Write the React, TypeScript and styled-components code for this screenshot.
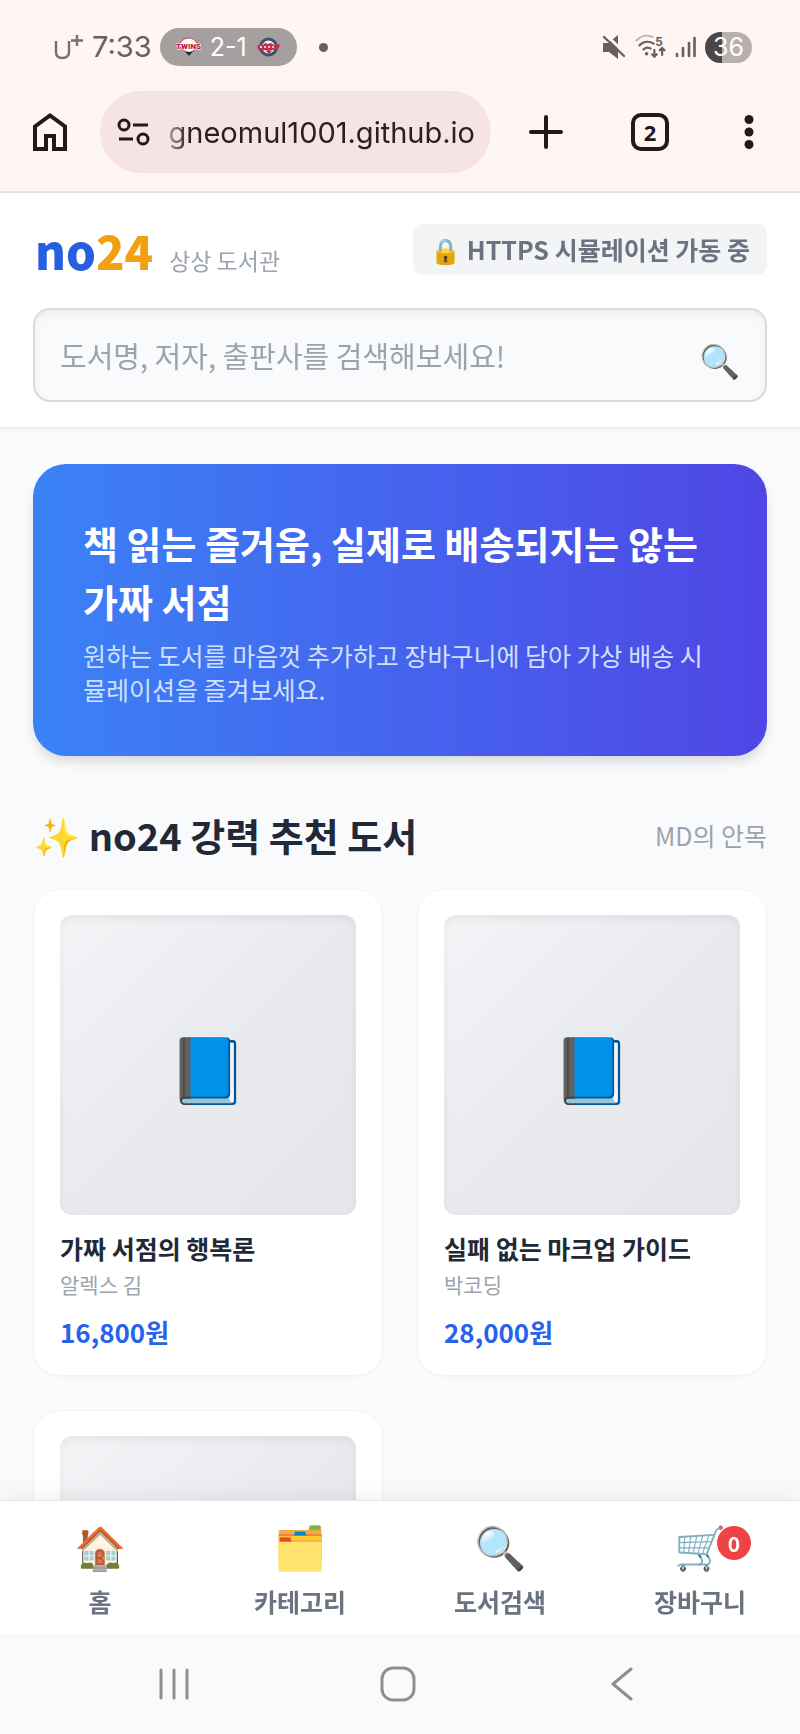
import React from "react";
import styled, { createGlobalStyle } from "styled-components";

const UI_FONT = '"Noto Sans CJK KR", "Noto Sans", sans-serif';
const SYSTEM_FONT = 'Inter, "Noto Sans CJK KR", sans-serif';

const GlobalStyle = createGlobalStyle`
  * { box-sizing: border-box; }
  html, body, #root { height: 100%; }
  body { margin: 0; background: #f9fafb; color: #1f2937; font-family: ${UI_FONT}; }
  h1, h2, h3, p { margin: 0; }
  button, input { font-family: inherit; }
  button { padding: 0; border: 0; background: none; cursor: pointer; }
  a { color: inherit; text-decoration: none; }
`;

const Screen = styled.div`
  display: flex;
  flex-direction: column;
  height: 100vh;
`;

/* ---------- phone status bar and browser toolbar ---------- */

const BrowserChrome = styled.div`
  flex: none;
  background: #fff6f4;
  border-bottom: 2px solid #ece0e0;
  font-family: ${SYSTEM_FONT};
`;

const StatusBar = styled.div`
  display: flex;
  align-items: center;
  justify-content: space-between;
  height: 67px;
  padding: 27px 48px 0 54px;
  color: #666060;
`;

const StatusGroup = styled.div<{ $gap: number }>`
  display: flex;
  align-items: center;
  gap: ${(p) => p.$gap}px;
`;

const Clock = styled.span`
  font-size: 29px;
  line-height: 40px;
`;

const ScorePill = styled.div`
  display: flex;
  align-items: center;
  justify-content: space-between;
  width: 137px;
  height: 38px;
  padding: 0 16px;
  border-radius: 19px;
  background: #a3a09f;
  color: #fff;
  font-size: 25px;
  line-height: 38px;
`;

const NoticeDot = styled.span`
  width: 9px;
  height: 9px;
  margin-left: 14px;
  border-radius: 50%;
  background: #666060;
`;

const Battery = styled.span`
  width: 47px;
  height: 31px;
  border-radius: 16px;
  background: linear-gradient(90deg, #4c4646 36%, #b8afaf 36%);
  color: #fff;
  font-size: 25px;
  line-height: 31px;
  text-align: center;
`;

const Toolbar = styled.div`
  display: flex;
  align-items: center;
  padding: 24px 4px 18px 0;
  color: #211a1a;
`;

const ToolButton = styled.button<{ $width: number }>`
  display: flex;
  align-items: center;
  justify-content: center;
  flex: none;
  width: ${(p) => p.$width}px;
  height: 82px;
  color: inherit;
`;

const AddressBar = styled.label`
  display: flex;
  align-items: center;
  flex: 1;
  min-width: 0;
  height: 82px;
  margin-right: 3px;
  padding: 0 16px 0 17px;
  border-radius: 41px;
  background: #f5e4e3;
`;

const AddressInput = styled.input`
  flex: 1;
  min-width: 0;
  height: 48px;
  margin-left: 14px;
  padding: 0;
  border: 0;
  outline: 0;
  background: none;
  color: #2a2020;
  font-size: 29px;
  text-align: right;
  mask-image: linear-gradient(90deg, rgba(0, 0, 0, 0.2), #000 24px);
`;

const StatusIcons = () => (
  <>
    <svg width="24" height="24" viewBox="0 0 24 24" aria-label="무음">
      <path d="M1 8h5l10-8v24l-9-7H1z" fill="#666060" />
      <path d="M3-1l22 21" stroke="#fff6f4" strokeWidth="3" />
      <path d="M2 2l20 19" stroke="#666060" strokeWidth="2.4" strokeLinecap="round" />
    </svg>
    <svg width="31" height="26" viewBox="0 0 32 26" fill="none" strokeWidth="2.2" aria-label="와이파이">
      <path d="M1 7C6 1 13 0 19 3" stroke="#bdb5b5" />
      <path d="M4 12c4-5 11-6 16-2M8 16c3-3 6-3 9-1" stroke="#666060" />
      <circle cx="12" cy="20" r="1.8" fill="#666060" />
      <path d="M20 15v8m-3-3l3 3 3-3M28 22v-8m-3 3l3-3 3 3" stroke="#666060" />
      <text x="21" y="12" fill="#666060" fontSize="12" fontWeight="700" fontFamily="Inter">5</text>
    </svg>
    <svg width="21" height="22" viewBox="0 0 21 22" stroke="#666060" strokeWidth="2.6" strokeLinecap="round" aria-label="신호">
      <path d="M2 18v2M8 12v8M14 7v13M19.500 2v18" />
    </svg>
  </>
);

const TwinsLogo = () => (
  <svg width="25" height="20" viewBox="0 0 25 20" aria-hidden="true">
    <path d="M3 9C5 3 9 1 13 1s7 2 9 8l-9 9z" fill="#fff" stroke="#c8304f" strokeWidth="1" />
    <path d="M9 14l4 5 4-5-4 1z" fill="#28233a" />
    <text x="12.500" y="12" textAnchor="middle" fontFamily="Roboto" fontWeight="900" fontSize="8" fill="#c0163b" stroke="#fff" strokeWidth="1.200" paintOrder="stroke">TWINS</text>
  </svg>
);

const RivalLogo = () => (
  <svg width="25" height="20" viewBox="0 0 25 20" aria-hidden="true">
    <circle cx="12.500" cy="10" r="8" fill="#eef0f4" stroke="#3d536f" strokeWidth="3" />
    <path d="M1 9l3-2 3 1 2-2 3 1 3-1 3 2 5-1 1 2-2 3-5 1-4 1-5-1-5 1z" fill="#c62f4a" />
    <path d="M4 10h2m2 0h2m2 0h2m2 0h2" stroke="#fff" strokeWidth="1.400" />
    <path d="M10 14l3 3 3-3z" fill="#c62f4a" />
  </svg>
);

const HomeOutline = () => (
  <svg width="34" height="38" viewBox="0 0 34 38" fill="none" stroke="currentColor" strokeWidth="4" aria-hidden="true">
    <path d="M2 36V13.500L17 2.500l15 11V36H21V23h-8v13z" />
  </svg>
);

const SiteSettings = () => (
  <svg width="33" height="28" viewBox="0 0 33 28" fill="none" stroke="#211a1a" strokeWidth="3" aria-hidden="true">
    <circle cx="7" cy="7" r="5" />
    <path d="M16 7h15M2 21h14" />
    <circle cx="26" cy="21" r="5" />
  </svg>
);

const PlusIcon = () => (
  <svg width="34" height="34" viewBox="0 0 34 34" stroke="currentColor" strokeWidth="4" strokeLinecap="round" aria-hidden="true">
    <path d="M17 2v30M2 17h30" />
  </svg>
);

const MoreIcon = () => (
  <svg width="10" height="34" viewBox="0 0 10 34" fill="currentColor" aria-hidden="true">
    <circle cx="5" cy="4.500" r="4.500" />
    <circle cx="5" cy="17" r="4.500" />
    <circle cx="5" cy="29.500" r="4.500" />
  </svg>
);

const TabCount = styled.span`
  width: 38px;
  height: 38px;
  border: 4px solid currentColor;
  border-radius: 10px;
  font: 700 22px/30px "Noto Sans", sans-serif;
  text-align: center;
`;

/* ---------- shop header ---------- */

const ShopHeader = styled.header`
  position: relative;
  flex: none;
  padding: 31px 33px 25px;
  border-bottom: 2px solid #eceef0;
  background: #fff;
  box-shadow: 0 2px 4px rgba(0, 0, 0, 0.04);
`;

const HeaderRow = styled.div`
  display: flex;
  align-items: flex-start;
  justify-content: space-between;
  height: 51px;
`;

const Brand = styled.h1`
  display: flex;
  align-items: baseline;
  padding-left: 2px;
  color: #2560e0;
  font-size: 47px;
  font-weight: 900;
  line-height: 52px;
`;

const BrandAccent = styled.span`
  color: #f1a010;
`;

const BrandNote = styled.span`
  margin-left: 16px;
  color: #9ca3af;
  font-size: 23px;
  font-weight: 400;
`;

const SecureBadge = styled.span`
  padding: 0 17px;
  border-radius: 9px;
  background: #f3f4f6;
  color: #6b7280;
  font-size: 25px;
  font-weight: 700;
  line-height: 51px;
`;

const SearchBox = styled.form`
  display: flex;
  align-items: center;
  height: 94px;
  margin-top: 33px;
  padding: 0 25px;
  border: 2px solid #d8dbdf;
  border-radius: 17px;
  background: #f9fafb;
  box-shadow: inset 0 4px 8px rgba(0, 0, 0, 0.05);
`;

const SearchInput = styled.input`
  flex: 1;
  min-width: 0;
  height: 60px;
  padding: 0;
  border: 0;
  outline: 0;
  background: none;
  font-size: 29px;
  &::placeholder { color: #9ca3af; opacity: 1; }
`;

const SearchButton = styled.button`
  padding-top: 8px;
  font-size: 33px;
  line-height: 40px;
`;

/* ---------- main content ---------- */

const Content = styled.main`
  flex: 1;
  min-height: 0;
  padding: 35px 33px;
  overflow-y: auto;
  scrollbar-width: none;
  background: #f9fafb;
`;

const Banner = styled.section`
  padding: 50px;
  border-radius: 33px;
  background: linear-gradient(90deg, #3b82f6, #4f46e5);
  box-shadow: 0 7px 12px -2px rgba(0, 0, 0, 0.14);
  color: #fff;
`;

const BannerTitle = styled.h2`
  font-size: 38px;
  font-weight: 700;
  line-height: 58px;
`;

const BannerText = styled.p`
  margin-top: 8px;
  color: #cfe0fd;
  font-size: 25px;
  line-height: 34px;
`;

const SectionHead = styled.div`
  display: flex;
  align-items: center;
  justify-content: space-between;
  margin: 50px 0 25px;
`;

const SectionTitle = styled.h2`
  font-size: 38px;
  font-weight: 700;
  line-height: 58px;
`;

const SectionNote = styled.span`
  color: #9ca3af;
  font-size: 25px;
  line-height: 34px;
`;

const BookGrid = styled.div`
  display: grid;
  grid-template-columns: 1fr 1fr;
  gap: 34px;
`;

const BookCard = styled.article`
  padding: 25px 26px;
  border: 1px solid #f1f3f5;
  border-radius: 26px;
  background: #fff;
  box-shadow: 0 1px 2px rgba(0, 0, 0, 0.03);
`;

const Cover = styled.div`
  display: flex;
  align-items: center;
  justify-content: center;
  height: 300px;
  margin-bottom: 14px;
  border-radius: 12px;
  background: linear-gradient(135deg, #f3f4f6, #e9eaee 50%, #e5e6e9);
  box-shadow: inset 0 4px 8px rgba(0, 0, 0, 0.06);
  font-size: 64px;
  line-height: 80px;
`;

const BookTitle = styled.h3`
  font-size: 25px;
  font-weight: 700;
  line-height: 38px;
`;

const Author = styled.p`
  color: #9ca3af;
  font-size: 21px;
  line-height: 34px;
`;

const Price = styled.p`
  margin-top: 13px;
  color: #2563eb;
  font-size: 26px;
  font-weight: 700;
  line-height: 36px;
`;

/* ---------- bottom navigation ---------- */

const BottomNav = styled.nav`
  position: relative;
  flex: none;
  display: grid;
  grid-template-columns: repeat(4, 1fr);
  height: 134px;
  padding: 18px 0 14px;
  border-top: 1px solid #e5e7eb;
  background: #fff;
  box-shadow: 0 -6px 20px rgba(0, 0, 0, 0.05);
`;

const NavLink = styled.a`
  display: flex;
  flex-direction: column;
  align-items: center;
  gap: 12px;
  color: #6b7280;
  font-size: 25px;
  font-weight: 700;
  line-height: 36px;
`;

const NavIcon = styled.span`
  position: relative;
  font-size: 42px;
  line-height: 52px;
`;

const CartCount = styled.span`
  position: absolute;
  top: 7px;
  right: -25px;
  width: 34px;
  height: 34px;
  border-radius: 50%;
  background: #ef4444;
  color: #fff;
  font-size: 21px;
  font-weight: 700;
  line-height: 34px;
  text-align: center;
`;

const SystemNav = styled.div`
  flex: none;
  display: grid;
  grid-template-columns: repeat(3, 1fr);
  height: 100px;
  padding: 0 66px 0 62px;
  background: #f8fafb;
`;

const SystemButton = styled.button`
  display: flex;
  align-items: center;
  justify-content: center;
  color: #8d8f91;
`;

const books = [
  { title: "가짜 서점의 행복론", author: "알렉스 김", price: "16,800원" },
  { title: "실패 없는 마크업 가이드", author: "박코딩", price: "28,000원" },
  { title: "", author: "", price: "" },
];

const navItems = [
  { icon: "🏠", label: "홈" },
  { icon: "🗂️", label: "카테고리" },
  { icon: "🔍", label: "도서검색" },
  { icon: "🛒", label: "장바구니", count: 0 },
];

export default function App() {
  return (
    <Screen>
      <GlobalStyle />
      <BrowserChrome>
        <StatusBar>
          <StatusGroup $gap={8}>
            <svg width="30" height="28" viewBox="0 0 30 28" fill="none" stroke="#777070" strokeWidth="2.400" aria-label="U+">
              <path d="M2 8v11c0 4 2 6 6 6s7-2 7-6V8M23 2v11M17 7.500h12" />
            </svg>
            <Clock>7:33</Clock>
            <ScorePill>
              <TwinsLogo />
              <span>2-1</span>
              <RivalLogo />
            </ScorePill>
            <NoticeDot />
          </StatusGroup>
          <StatusGroup $gap={9}>
            <StatusIcons />
            <Battery>36</Battery>
          </StatusGroup>
        </StatusBar>
        <Toolbar>
          <ToolButton $width={100} aria-label="홈페이지"><HomeOutline /></ToolButton>
          <AddressBar>
            <SiteSettings />
            <AddressInput aria-label="주소" defaultValue="gneomul1001.github.io" />
          </AddressBar>
          <ToolButton $width={104} aria-label="새 탭"><PlusIcon /></ToolButton>
          <ToolButton $width={104} aria-label="탭 목록"><TabCount>2</TabCount></ToolButton>
          <ToolButton $width={94} aria-label="더보기"><MoreIcon /></ToolButton>
        </Toolbar>
      </BrowserChrome>

      <ShopHeader>
        <HeaderRow>
          <Brand>no<BrandAccent>24</BrandAccent><BrandNote>상상 도서관</BrandNote></Brand>
          <SecureBadge>🔒 HTTPS 시뮬레이션 가동 중</SecureBadge>
        </HeaderRow>
        <SearchBox>
          <SearchInput aria-label="도서 검색" placeholder="도서명, 저자, 출판사를 검색해보세요!" />
          <SearchButton type="button" aria-label="검색">🔍</SearchButton>
        </SearchBox>
      </ShopHeader>

      <Content>
        <Banner>
          <BannerTitle>책 읽는 즐거움, 실제로 배송되지는 않는 가짜 서점</BannerTitle>
          <BannerText>원하는 도서를 마음껏 추가하고 장바구니에 담아 가상 배송 시뮬레이션을 즐겨보세요.</BannerText>
        </Banner>
        <SectionHead>
          <SectionTitle>✨ no24 강력 추천 도서</SectionTitle>
          <SectionNote>MD의 안목</SectionNote>
        </SectionHead>
        <BookGrid>
          {books.map((book, i) => (
            <BookCard key={i}>
              <Cover>{book.title && "📘"}</Cover>
              <BookTitle>{book.title}</BookTitle>
              <Author>{book.author}</Author>
              <Price>{book.price}</Price>
            </BookCard>
          ))}
        </BookGrid>
      </Content>

      <BottomNav>
        {navItems.map((item) => (
          <NavLink key={item.label} href="#">
            <NavIcon>
              {item.icon}
              {item.count !== undefined && <CartCount>{item.count}</CartCount>}
            </NavIcon>
            {item.label}
          </NavLink>
        ))}
      </BottomNav>

      <SystemNav>
        <SystemButton aria-label="최근 앱">
          <svg width="32" height="34" viewBox="0 0 32 34" stroke="currentColor" strokeWidth="3" strokeLinecap="round">
            <path d="M3 3v28M16 3v28M29 3v28" />
          </svg>
        </SystemButton>
        <SystemButton aria-label="홈 화면">
          <svg width="36" height="36" viewBox="0 0 36 36" fill="none" stroke="currentColor" strokeWidth="3">
            <rect x="2" y="2" width="32" height="32" rx="11" />
          </svg>
        </SystemButton>
        <SystemButton aria-label="뒤로">
          <svg width="22" height="36" viewBox="0 0 22 36" fill="none" stroke="currentColor" strokeWidth="3" strokeLinecap="round" strokeLinejoin="round">
            <path d="M20 3L2 18l18 15" />
          </svg>
        </SystemButton>
      </SystemNav>
    </Screen>
  );
}
